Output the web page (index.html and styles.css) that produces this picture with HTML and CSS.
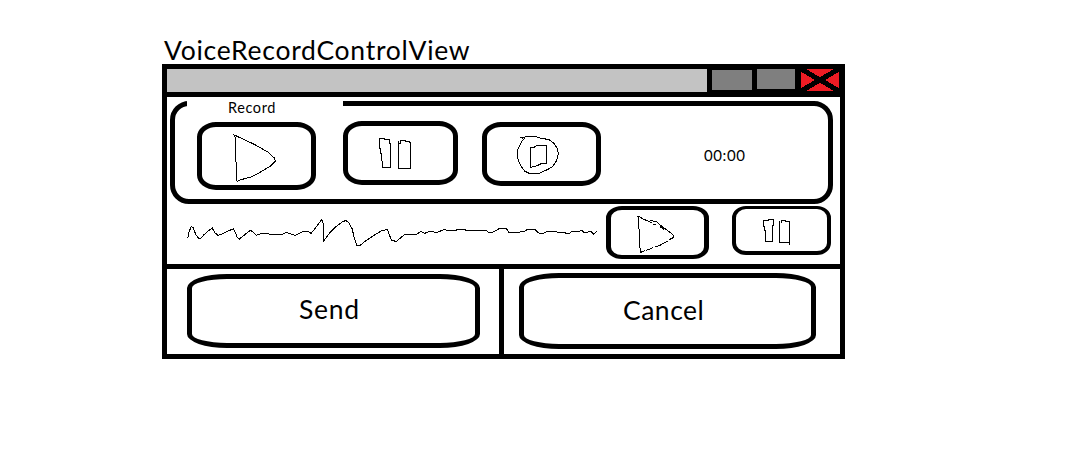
FILE: index.html
```html
<!DOCTYPE html>
<html lang="en">
<head>
<meta charset="utf-8">
<title>VoiceRecordControlView</title>
<link rel="stylesheet" href="styles.css">
</head>
<body>
<main class="page">
  <h1 class="view-name">VoiceRecordControlView</h1>
  <section class="window">
    <header class="titlebar">
      <div class="caption"></div>
      <div class="minimize"></div>
      <div class="maximize"></div>
      <svg class="close" viewBox="0 0 38 22"><path d="M0 0L38 22M0 22L38 0"/></svg>
    </header>
    <div class="recorder">
      <span class="legend">Record</span>
      <button class="btn rec-play"><svg class="icon" width="50" height="55" viewBox="225 120 150 165"><path d="M235 133L240 140V208L243 216V260L246 274L258 269L285 262L315 247L345 229L361 213L358 204L340 187L300 164L270 150L240 136"/></svg></button>
      <button class="btn rec-pause"><svg class="icon" width="40" height="35" viewBox="135 135 120 105"><path d="M148.500 145.500H163.500V148.500H178.500V160.500H181.500V232.500H157.500L154.500 190.500H151.500V175.500H148.500ZM205.500 153V235.500H241.500V156.500H238.500V153.500H226.500V151.500H211.500V159.500H205.500"/></svg></button>
      <button class="btn rec-stop"><svg class="icon" width="45" height="44" viewBox="135 129 135 132"><path d="M151 143H160M155 147L166 140H200L205 143L237 149L252 160L262 175L265 190L260 212L247 230L232 239L207 250H178L165 244L155 231L146 215L142 200V180L148 168L156 153L165 143M181.500 172H193L199 166.500H229.500V221H214L199 228L181.500 232Z"/></svg></button>
      <time class="timer">00:00</time>
    </div>
    <div class="playback">
      <svg class="wave" width="411" height="35" viewBox="187 215 411 35"><path d="M187.700 238.300L189.300 231 191.300 226.700 193.300 227.700 195.700 234.300 198.500 238 200.500 238.500 204 234.700 208.300 231 212.300 228 214.500 232.300 217.700 235.300 223.500 233.500 227.700 231 233.500 229 235.500 232.500 236.700 237 239 239.300 243.300 236 247.700 232.300 250.700 230.300 253.300 232.300 256 235.300 262 233.500 268 233.500 270.500 234.400 282.500 234.400 286.500 232.400 295 235.500 303.500 231.400 308.500 231.500 311 233.500 315 228.500 318.500 224 321.700 219.500 322.700 222 323.500 225 323.500 241.400 330 232.500 336.700 226 342.700 221.700 345.700 220.500 348.700 222.700 352.300 229 354 237.300 356.700 245.400 360 245.400 365 241.400 373.300 235.700 381.700 230.700 387.300 229.400 389.300 235 391.700 240.400 396.300 241.400 404.700 234.500 416.500 234.400 420.500 231.400 424.500 233.400 430 231.400 436.700 232.400 445 229.400 447.300 230.400 456 230.400 457.500 229.400 465 229.400 466 230.400 486 230.400 488.700 232.400 492.700 232.400 496 230.400 499.500 228.500 506.500 228.500 508.700 232.400 519.500 232.400 520.700 231.400 524 231.400 527.500 229.400 535 229.400 537.500 232 540 233.400 543.500 233.400 546.700 231.400 556.700 231.400 557.500 232.400 565 232.400 566 233.400 569.500 233.400 572 231.400 579.500 231.400 580.500 230.400 582.500 230.400 583.500 232.400 587.500 232.400 588.500 231.400 591 231.400 593.700 234.400 596.500 231.400"/></svg>
      <button class="btn play"><svg class="icon" width="45" height="42" viewBox="105 54 135 126"><path d="M112 65H118L130 72 150 81 156 83M159 87L167 90M116.500 65V100L119.500 110V155L122 172L135 167M138 166L160 158M164 156L180 151L205 137M208 134L221 127V121L205 108L190 97L178 88L170 79L150 77"/><path class="scribble" d="M180 93L192 102"/></svg></button>
      <button class="btn pause"><svg class="icon" width="35" height="30" viewBox="120 63 105 90"><path d="M158 74.500H145.500V77.500H131.500V94.500H134.500V107.500H137.500V139.500H158.500V92.500H160.500V72M178.500 77V142.500H208.500M208.500 149V80.500H196.500V77.500H184.500V83"/></svg></button>
    </div>
    <footer class="actions">
      <div class="cell send-cell"><button class="btn send"><span>Send</span></button></div>
      <div class="cell cancel-cell"><button class="btn cancel"><span>Cancel</span></button></div>
    </footer>
  </section>
</main>
</body>
</html>
```
FILE: styles.css
```css
* { box-sizing: border-box; }
body { margin: 0; background: #fff; color: #000; font-family: Lato, "Open Sans", sans-serif; }
.page { padding: 34px 0 0 162px; }
.view-name { margin: 0; padding-left: 2px; height: 30px; font-size: 26.5px; line-height: 32px; font-weight: 400; letter-spacing: 0.74px; white-space: nowrap; }
.window { width: 683px; height: 295px; border: 5px solid #000; }

.titlebar { display: flex; height: 28px; background: #000; }
.caption { width: 540px; height: 23px; background: #c3c3c3; }
.minimize { width: 40px; height: 20px; margin: 1px 0 0 5px; background: #7f7f7f; }
.maximize { width: 38px; height: 20px; margin-left: 5px; background: #7f7f7f; }
.close { width: 38px; height: 22px; margin-left: 6px; background: #ed1c24; fill: none; stroke: #000; stroke-width: 5; shape-rendering: crispEdges; }

.btn { display: flex; align-items: flex-start; margin: 0; padding: 0; flex: none; border: 5px solid #000; border-radius: 19px / 15px; background: #fff; color: #000; font-family: inherit; }
.icon, .wave { display: block; flex: none; fill: none; stroke: #000; shape-rendering: crispEdges; }
.icon { stroke-width: 3; }
.scribble { stroke-width: 6; }

.recorder { position: relative; display: flex; align-items: flex-start; width: 663px; height: 103px; margin: 4px 0 0 3px; padding-left: 22px; border: 5px solid #000; border-radius: 19px; }
.legend { position: absolute; left: 12px; top: -5px; width: 156px; height: 16px; padding-left: 41px; background: #fff; font-size: 14.5px; line-height: 13px; letter-spacing: 0.6px; }
.rec-play { width: 119px; height: 68px; margin-top: 16px; padding: 3px 0 0 28px; }
.rec-pause { width: 115px; height: 64px; margin: 15px 0 0 27px; padding: 9px 0 0 27px; }
.rec-stop { width: 119px; height: 64px; margin: 16px 0 0 24px; padding: 6px 0 0 28px; }
.timer { margin: 39px 0 0 103px; font-size: 15px; line-height: 20px; letter-spacing: 0.6px; }

.playback { display: flex; align-items: flex-start; height: 60px; padding-left: 20px; }
.wave { margin-top: 11px; stroke-width: 1; }
.play { width: 103px; height: 53px; margin: 2px 0 0 8px; padding: 3px 0 0 24px; border-width: 4px 5px; border-radius: 16px / 12px; }
.pause { width: 99px; height: 49px; margin: 2px 0 0 23px; padding: 7px 0 0 24px; border-width: 3px 4px 4px; border-radius: 14px / 12px; }

.actions { display: flex; height: 90px; border-top: 5px solid #000; }
.cell { height: 85px; }
.send-cell { width: 337px; padding: 5px 0 0 20px; border-right: 5px solid #000; }
.cancel-cell { padding: 4px 0 0 15px; }
.send, .cancel { border-radius: 40px / 14px; font-size: 26.5px; line-height: 32px; letter-spacing: 0.7px; }
.send { width: 293px; height: 74px; padding: 14px 0 0 107px; }
.cancel { width: 297px; height: 76px; padding: 16px 0 0 99px; letter-spacing: 0.5px; }
```
